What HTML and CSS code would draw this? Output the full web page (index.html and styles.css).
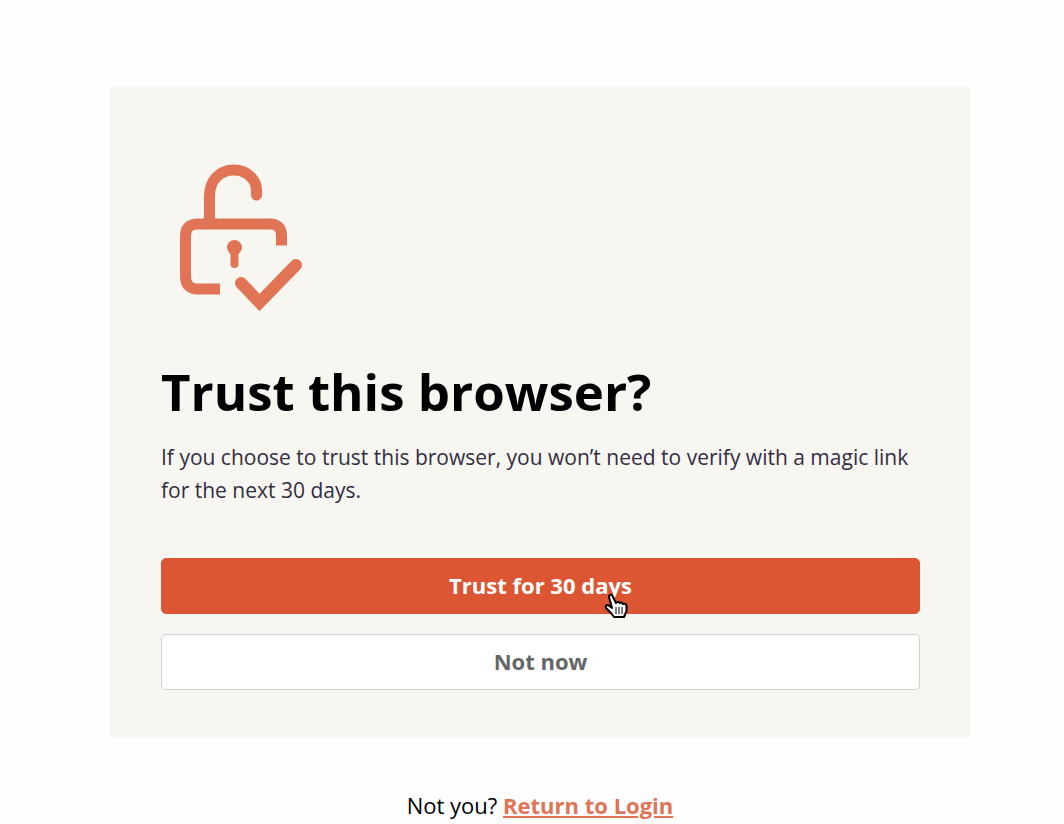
FILE: index.html
```html
<!DOCTYPE html>
<html lang="en">
<head>
    <meta charset="UTF-8">
    <meta name="viewport" content="width=device-width, initial-scale=1.0">
    <title>Trust this browser?</title>
    <link rel="stylesheet" href="styles.css">
</head>
<body>
    <main class="container">
        <svg class="lock-icon" viewBox="1 0 160 175" aria-hidden="true">
            <g fill="none" stroke="#e17455" stroke-width="11">
                <path d="M49.5 70V46C49.5 30 60 20 74 20S96.5 31 96.5 40V45"/>
                <path d="M96.5 40V45" stroke-linecap="round"/>
                <path d="M60 139H38Q25.5 139 25.5 126V86Q25.5 74 38 74H110Q121.5 74 121.5 86V95.5"/>
                <path d="M81 133l18.5 19.5L136 115" stroke-width="12" stroke-linecap="round"/>
                <path d="M74.5 98v16" stroke-width="8" stroke-linecap="round"/>
            </g>
            <circle cx="74.5" cy="97.5" r="7.5" fill="#e17455"/>
        </svg>
        <h1>Trust this browser?</h1>
        <p class="message">If you choose to trust this browser, you won’t need to verify with a magic link for the next 30 days.</p>
        <div class="buttons">
            <button type="button" class="btn trust-btn">Trust for 30 days
                <svg class="cursor" viewBox="0 0 24 27" aria-hidden="true">
                    <path d="M8 15L5 4Q5 1 8 2L12 10Q14 8 16 10Q18 9 19 11Q22 10 22.5 13V18L20 24H10L7 20L2 15Q1 12 4 12Z" fill="#fff" stroke="#000" stroke-width="2" stroke-linejoin="round"/>
                    <path d="M12 14v7M15 14v7M18 14v7" stroke="#000" stroke-width="1"/>
                </svg>
            </button>
            <button type="button" class="btn skip-btn">Not now</button>
        </div>
    </main>
    <p class="login">Not you? <a href="#">Return to Login</a></p>
</body>
</html>
```
FILE: styles.css
```css
* {
    box-sizing: border-box;
}
body {
    margin: 0;
    padding: 86px 24px 0 40px;
    background: #fefefe;
    color: #000;
    font-family: "Open Sans", sans-serif;
}
.container {
    max-width: 860px;
    margin: 0 auto;
    padding: 64px 50px 48px 51px;
    background: #f7f6f1;
}
.lock-icon {
    display: block;
    width: 160px;
    height: 175px;
}
h1 {
    margin: 32px 0 16px;
    font-size: 51px;
    line-height: 68px;
}
.message {
    margin: 0;
    color: #342d43;
    font-size: 21px;
    line-height: 33px;
}
.buttons {
    display: grid;
    gap: 20px;
    margin-top: 51px;
}
.btn {
    position: relative;
    height: 56px;
    padding: 0 16px 2px;
    border: 1px solid #d2d2d2;
    border-radius: 5px;
    font-family: inherit;
    font-size: 22px;
    font-weight: 700;
    cursor: pointer;
}
.trust-btn {
    background: #dc5633;
    border-color: #dc5633;
    color: #fff;
}
.skip-btn {
    background: #fff;
    color: #666;
}
/* pointer resting on the primary button */
.cursor {
    position: absolute;
    top: 34px;
    left: calc(50% + 63px);
    width: 24px;
    height: 27px;
}
.login {
    margin: 51px 0 0;
    font-size: 22px;
    line-height: 32px;
    text-align: center;
}
.login a {
    color: #e17455;
    font-weight: 700;
}
```
